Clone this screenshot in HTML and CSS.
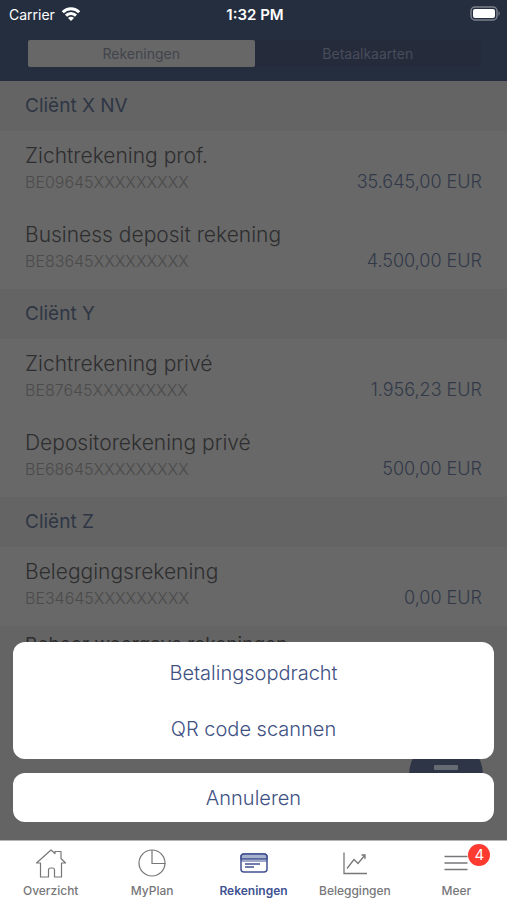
FILE: index.html
```html
<!DOCTYPE html>
<html lang="nl">
<head>
    <meta charset="UTF-8">
    <meta name="viewport" content="width=device-width, initial-scale=1.0">
    <title>Rekeningen</title>
    <link rel="stylesheet" href="styles.css">
</head>
<body>
    <header class="header">
        <div class="status-bar">
            <div class="carrier">
                <span>Carrier</span>
                <svg width="20" height="16" viewBox="0 0 20 16" fill="none" stroke="#fff" stroke-width="3">
                    <path d="M1.8 6.2a11.6 11.6 0 0 1 16.4 0"/>
                    <path d="M5 9.6a7 7 0 0 1 10 0"/>
                    <path d="M10 15l-3-3a4.2 4.2 0 0 1 6 0z" fill="#fff" stroke="none"/>
                </svg>
            </div>
            <span class="time">1:32 PM</span>
            <svg class="battery" width="32" height="16" viewBox="0 0 32 16">
                <rect x="2" y="1" width="26" height="13" rx="4" fill="none" stroke="#7b818c" stroke-width="1.5"/>
                <rect x="4" y="3" width="22" height="9" rx="2" fill="#fff"/>
                <path d="M29.5 5q2.5 2.5 0 5z" fill="#7b818c"/>
            </svg>
        </div>
        <div class="segments">
            <button type="button" class="segment active">Rekeningen</button>
            <button type="button" class="segment">Betaalkaarten</button>
        </div>
    </header>

    <main class="content">
        <section>
            <h2>Cliënt X NV</h2>
            <div class="account">
                <div class="name">Zichtrekening prof.</div>
                <div class="details"><span class="iban">BE09645XXXXXXXXX</span><span class="amount">35.645,00 EUR</span></div>
            </div>
            <div class="account">
                <div class="name">Business deposit rekening</div>
                <div class="details"><span class="iban">BE83645XXXXXXXXX</span><span class="amount">4.500,00 EUR</span></div>
            </div>
        </section>
        <section>
            <h2>Cliënt Y</h2>
            <div class="account">
                <div class="name">Zichtrekening privé</div>
                <div class="details"><span class="iban">BE87645XXXXXXXXX</span><span class="amount">1.956,23 EUR</span></div>
            </div>
            <div class="account">
                <div class="name">Depositorekening privé</div>
                <div class="details"><span class="iban">BE68645XXXXXXXXX</span><span class="amount">500,00 EUR</span></div>
            </div>
        </section>
        <section>
            <h2>Cliënt Z</h2>
            <div class="account">
                <div class="name">Beleggingsrekening</div>
                <div class="details"><span class="iban">BE34645XXXXXXXXX</span><span class="amount">0,00 EUR</span></div>
            </div>
        </section>
        <a href="#" class="manage">Beheer weergave rekeningen</a>

        <button type="button" class="fab" aria-label="Nieuwe betaling">
            <svg width="24" height="24" viewBox="0 0 24 24" fill="#666a73">
                <rect x="0" y="3" width="24" height="5" rx="1"/>
                <rect x="0" y="13" width="24" height="5" rx="1"/>
            </svg>
        </button>

        <div class="sheet">
            <div class="sheet-group">
                <button type="button">Betalingsopdracht</button>
                <button type="button">QR code scannen</button>
            </div>
            <div class="sheet-group cancel">
                <button type="button">Annuleren</button>
            </div>
        </div>
    </main>

    <nav class="tabs">
        <a href="#" class="tab">
            <svg width="34" height="32" viewBox="0 0 34 32" fill="none" stroke="#77777a" stroke-width="1.2" stroke-linejoin="round">
                <path d="M6.5 16H2.5L17 3l4 3.5V4.5h6v7l4.500 4.500h-4V30h-7v-7q0-2-2-2h-2q-2 0-2 2v7h-8z"/>
            </svg>
            <span>Overzicht</span>
        </a>
        <a href="#" class="tab">
            <svg width="34" height="32" viewBox="0 0 34 32" fill="none" stroke="#77777a" stroke-width="1.2">
                <circle cx="17" cy="16" r="13"/>
                <path d="M17 3v13.5h13.5"/>
            </svg>
            <span>MyPlan</span>
        </a>
        <a href="#" class="tab active">
            <svg width="34" height="32" viewBox="0 0 34 32" fill="none" stroke="#405291" stroke-width="1.5">
                <rect x="4" y="7" width="26" height="18" rx="3"/>
                <path d="M4 12v-2q0-3 3-3h20q3 0 3 3v2z" fill="#a6b1cc"/>
                <path d="M4 14h26" stroke-width="1"/>
                <path d="M8 17h15M8 20h9" stroke-width="1.3"/>
            </svg>
            <span>Rekeningen</span>
        </a>
        <a href="#" class="tab">
            <svg width="34" height="32" viewBox="0 0 34 32" fill="none" stroke="#77777a" stroke-width="1.3">
                <path d="M6 5.5v21h23"/>
                <path d="M9 21.5l7-9 4 4L27 8M23.5 8H27v4"/>
            </svg>
            <span>Beleggingen</span>
        </a>
        <a href="#" class="tab">
            <svg width="34" height="32" viewBox="0 0 34 32" fill="none" stroke="#77777a" stroke-width="1.3">
                <path d="M5.5 9.5h23M5.5 16h23M5.5 22.5h23"/>
            </svg>
            <span>Meer</span>
            <span class="badge">4</span>
        </a>
    </nav>
</body>
</html>
```

FILE: styles.css
```css
* {
    box-sizing: border-box;
}
body {
    margin: 0;
    min-height: 100vh;
    display: flex;
    flex-direction: column;
    font-family: Inter, "Liberation Sans", sans-serif;
    background-color: #646464;
}
button {
    font-family: inherit;
    border: none;
    padding: 0;
    cursor: pointer;
}
a {
    text-decoration: none;
}

/* header */
.header {
    background-color: #252e3e;
    padding-bottom: 14px;
}
.status-bar {
    display: grid;
    grid-template-columns: 1fr auto 1fr;
    align-items: center;
    height: 28px;
    padding: 0 6px 0 9px;
    font-size: 14px;
    color: #fff;
}
.carrier {
    display: flex;
    align-items: center;
    gap: 6px;
}
.time {
    font-size: 15px;
    font-weight: 600;
}
.battery {
    justify-self: end;
}
.segments {
    display: flex;
    margin: 12px 26px 0 28px;
}
.segment {
    flex: 1;
    height: 27px;
    border-radius: 2px;
    background-color: #252b3b;
    color: #484d5a;
    font-size: 14px;
}
.segment.active {
    background-color: #676767;
    color: #41444b;
}

/* accounts */
.content {
    flex: 1;
    position: relative;
}
h2 {
    margin: 0;
    padding: 0 25px;
    background-color: #646464;
    color: #2e3644;
    font-size: 19px;
    font-weight: 400;
    line-height: 50px;
}
.account {
    height: 79px;
    padding: 12px 25px 0;
    background-color: #686868;
}
.name {
    color: #2e2e2f;
    font-size: 21px;
    font-weight: 300;
    line-height: 26px;
}
.details {
    display: flex;
    justify-content: space-between;
    align-items: center;
    line-height: 26px;
}
.iban {
    color: #4b4b4b;
    font-size: 16px;
    font-weight: 300;
}
.amount {
    color: #313948;
    font-size: 18px;
    font-weight: 300;
}
.manage {
    display: block;
    padding: 6px 25px;
    color: #2e2e2f;
    font-size: 19px;
    font-weight: 400;
    line-height: 26px;
}
.fab {
    position: absolute;
    right: 24px;
    bottom: 28px;
    width: 74px;
    height: 74px;
    border-radius: 50%;
    background-color: #2e3546;
}

/* action sheet */
.sheet {
    position: absolute;
    left: 13px;
    right: 13px;
    bottom: 18px;
    display: flex;
    flex-direction: column;
    gap: 14px;
}
.sheet-group {
    display: flex;
    flex-direction: column;
    padding: 3px 0 2px;
    border-radius: 12px;
    background-color: #fff;
}
.sheet-group button {
    height: 56px;
    background: none;
    color: #405183;
    font-size: 20px;
    font-weight: 300;
}
.sheet-group.cancel {
    padding: 0;
}
.sheet-group.cancel button {
    height: 49px;
}

/* bottom tabs */
.tabs {
    display: flex;
    height: 60px;
    border-top: 1px solid #b5b5b5;
    background-color: #fff;
    overflow: hidden;
}
.tab {
    position: relative;
    flex: 1;
    display: flex;
    flex-direction: column;
    align-items: center;
    padding-top: 6px;
    color: #77777a;
    font-size: 12px;
    font-weight: 500;
    line-height: 24px;
}
.tab svg {
    flex-shrink: 0;
}
.tab.active {
    color: #405291;
    font-weight: 600;
}
.badge {
    position: absolute;
    top: 3px;
    left: 50%;
    margin-left: 12px;
    width: 22px;
    height: 22px;
    border-radius: 50%;
    background-color: #fd3b31;
    color: #fff;
    font-size: 15px;
    font-weight: 400;
    line-height: 22px;
    text-align: center;
}
```
